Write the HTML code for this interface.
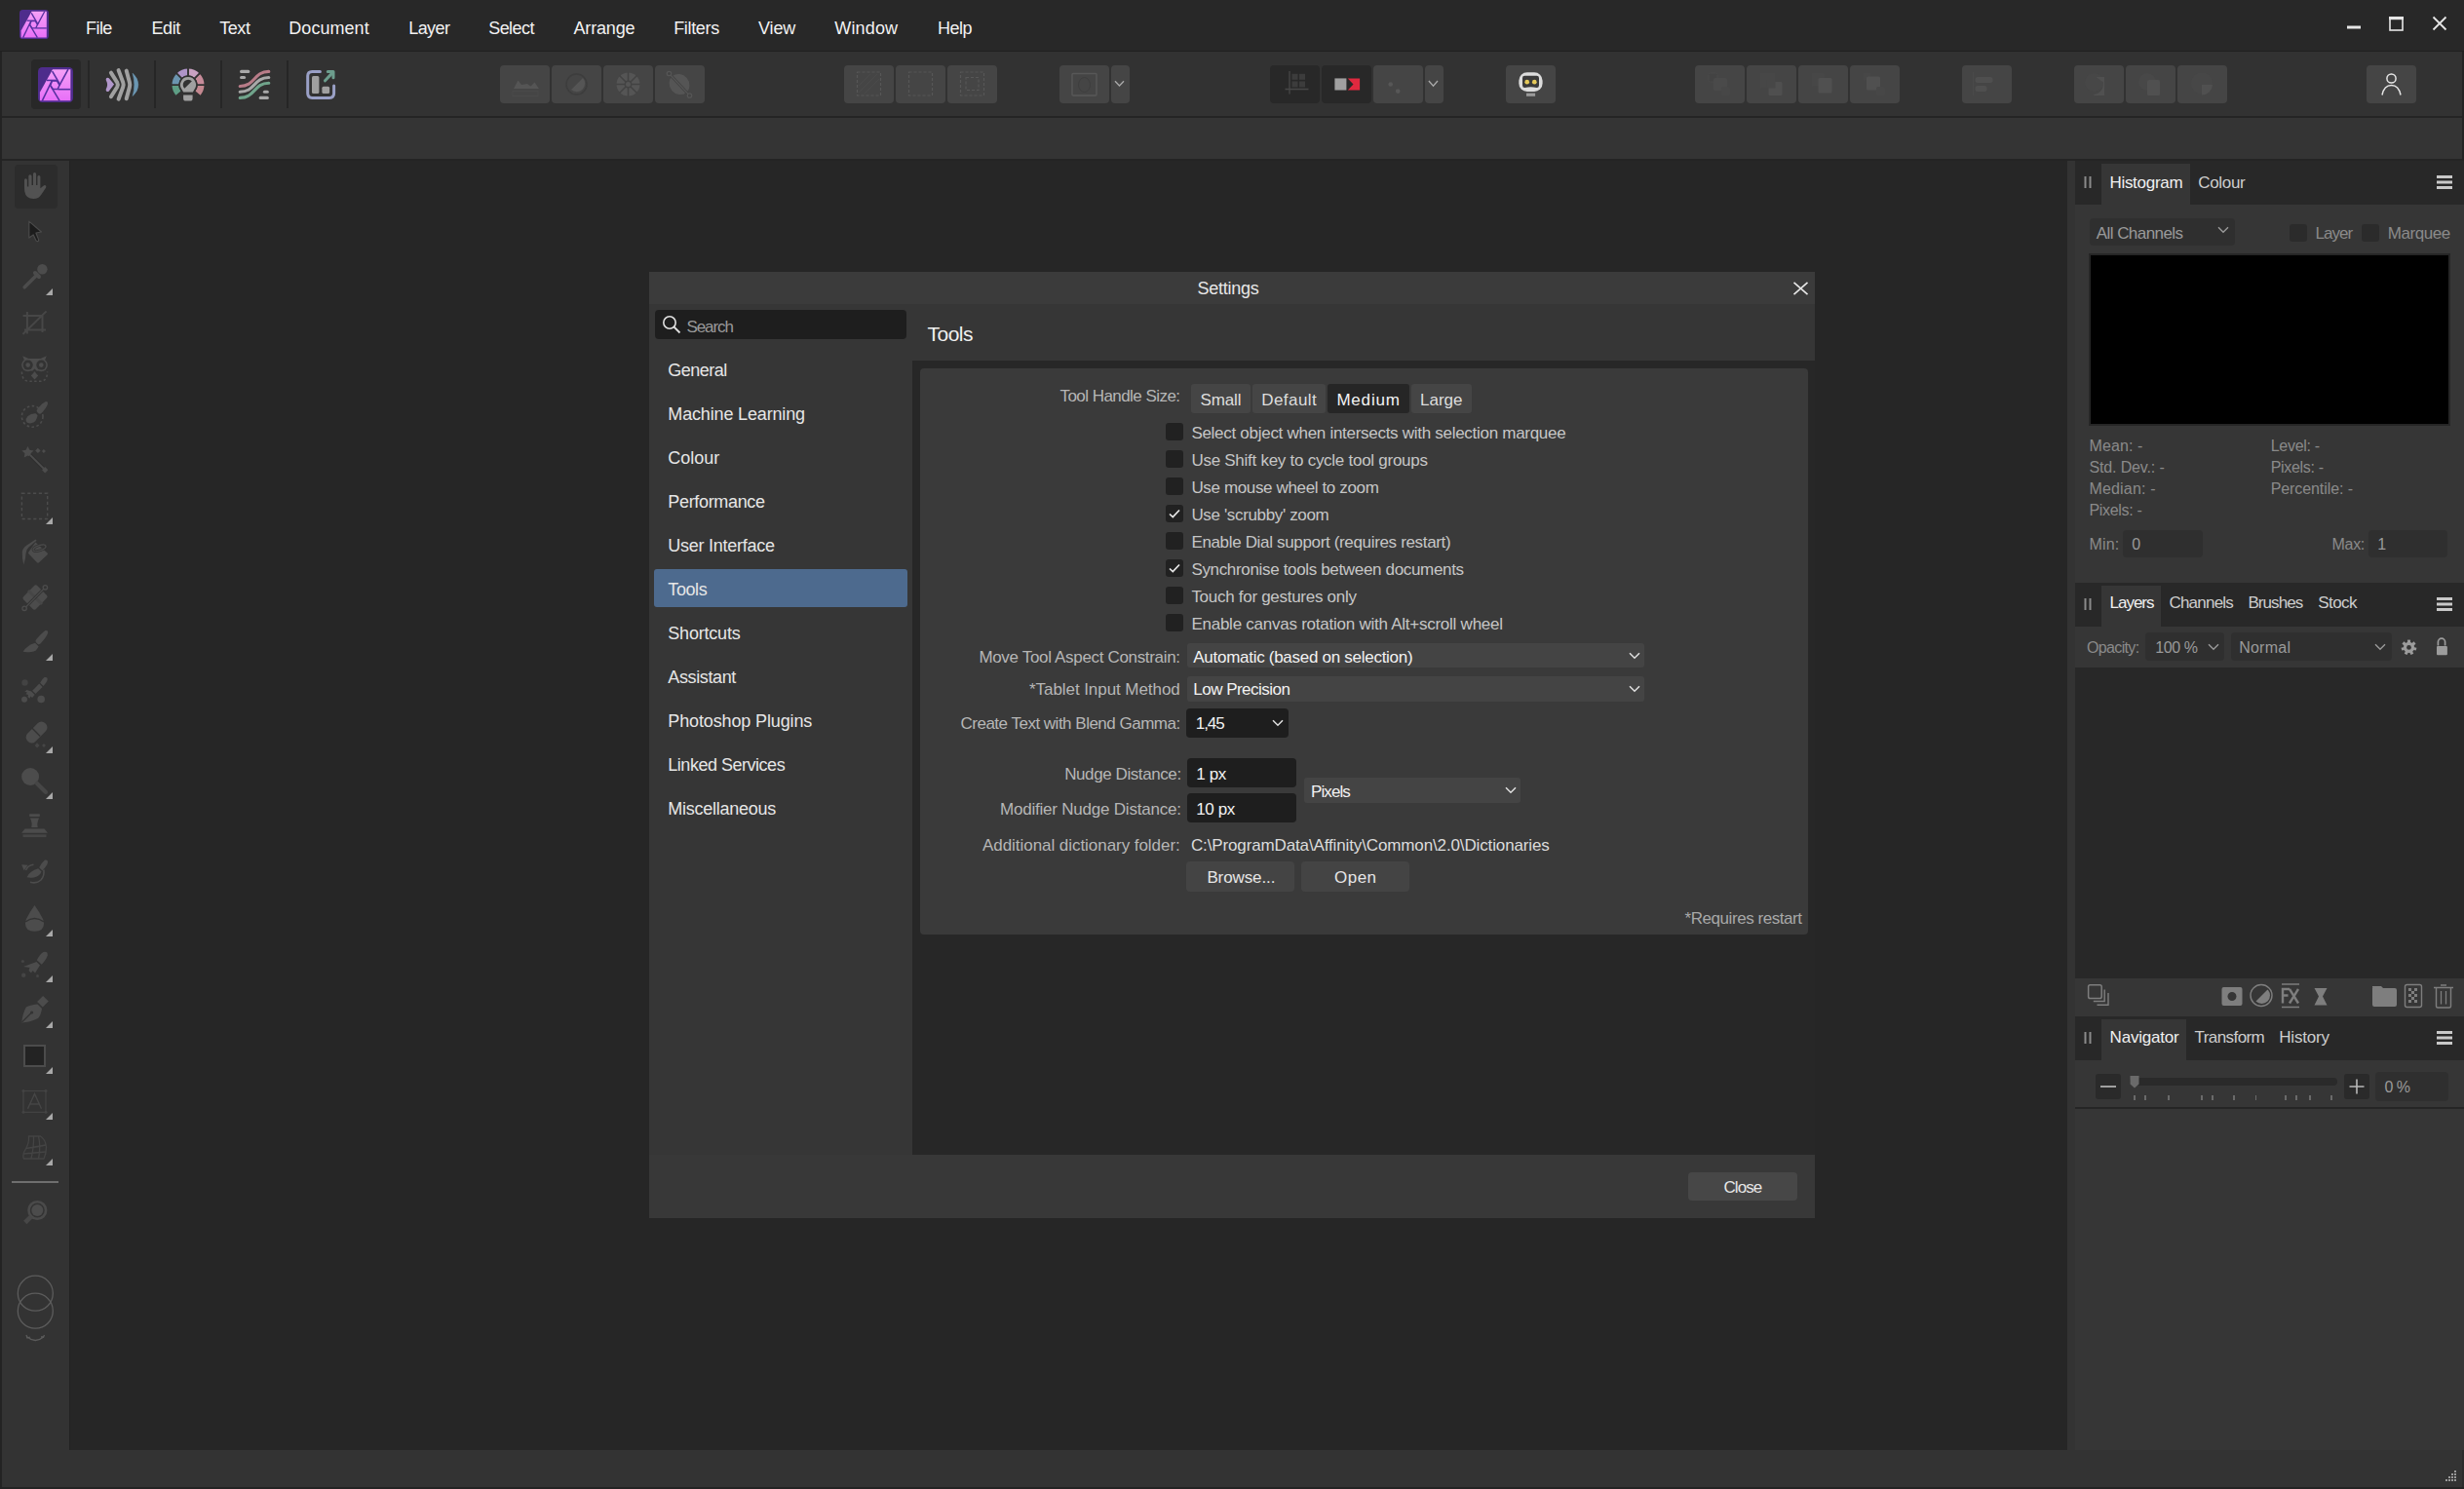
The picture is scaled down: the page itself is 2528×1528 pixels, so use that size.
<!DOCTYPE html>
<html><head><meta charset="utf-8"><title>Affinity Photo - Settings</title>
<style>
html,body{margin:0;padding:0;}
body{width:2528px;height:1528px;position:relative;overflow:hidden;background:#232323;font-family:"Liberation Sans", sans-serif;}
body>div,body>svg{position:absolute;}
.t{white-space:pre;line-height:1;}
</style></head><body>
<div style="left:0px;top:0px;width:2528px;height:52px;background:#282828;"></div>
<div style="left:0px;top:52px;width:2528px;height:1px;background:#202020;"></div>
<div style="left:2px;top:53px;width:2524px;height:66px;background:#323232;"></div>
<div style="left:2px;top:119px;width:2524px;height:2px;background:#242424;"></div>
<div style="left:2px;top:121px;width:2524px;height:42px;background:#343434;"></div>
<div style="left:2px;top:163px;width:2524px;height:2px;background:#242424;"></div>
<div style="left:2px;top:165px;width:69px;height:1323px;background:#333333;"></div>
<div style="left:71px;top:165px;width:2050px;height:1323px;background:#262626;"></div>
<div style="left:71px;top:165px;width:1px;height:1323px;background:#232323;"></div>
<div style="left:2121px;top:165px;width:8px;height:1323px;background:#333333;"></div>
<div style="left:2129px;top:165px;width:399px;height:1323px;background:#363636;"></div>
<div style="left:2526px;top:1488px;width:2px;height:38px;background:#2b2b2b;"></div>
<div style="left:2px;top:1488px;width:2524px;height:38px;background:#333333;"></div>
<svg style="left:20px;top:9.5px;" width="30" height="30" viewBox="0 0 30 30"><defs><linearGradient id="pg20" x1="0" y1="0" x2="0" y2="1"><stop offset="0" stop-color="#f5a0f7"/><stop offset="1" stop-color="#e86ff8"/></linearGradient></defs>
<g transform="scale(1.0)">
<rect x="0" y="0" width="30" height="30" rx="3.6" fill="#4e2c8c"/>
<path d="M12.5 1.8 H27.8 V28.6 H1.6 V21.4 Z" fill="url(#pg20)"/>
<g stroke="#5530a0" stroke-width="1.3" stroke-linecap="butt" fill="none">
<path d="M11.96 11.69 L16.26 11.69 L18.41 15.19 L16.8 18.82 L12.77 18.82 L10.62 15.46 Z"/>
<path d="M12.2 3.4 L18.9 14.9"/><path d="M25.8 1.8 L18.3 15.6"/><path d="M7.5 11.2 H15.9"/>
<path d="M12.0 11.3 L3.6 28.6"/><path d="M10.8 15.9 L18.4 28.6"/><path d="M17.2 18.9 H27.8"/>
</g></g></svg>
<div class="t" style="left:88.00px;top:19.76px;font-size:18px;color:#f2f2f2;letter-spacing:-0.554px;">File</div>
<div class="t" style="left:155.40px;top:19.76px;font-size:18px;color:#f2f2f2;letter-spacing:-0.358px;">Edit</div>
<div class="t" style="left:225.20px;top:19.76px;font-size:18px;color:#f2f2f2;letter-spacing:-0.429px;">Text</div>
<div class="t" style="left:296.30px;top:19.76px;font-size:18px;color:#f2f2f2;letter-spacing:0.044px;">Document</div>
<div class="t" style="left:419.20px;top:19.76px;font-size:18px;color:#f2f2f2;letter-spacing:-0.566px;">Layer</div>
<div class="t" style="left:501.20px;top:19.76px;font-size:18px;color:#f2f2f2;letter-spacing:-0.555px;">Select</div>
<div class="t" style="left:588.50px;top:19.76px;font-size:18px;color:#f2f2f2;letter-spacing:-0.164px;">Arrange</div>
<div class="t" style="left:691.20px;top:19.76px;font-size:18px;color:#f2f2f2;letter-spacing:-0.329px;">Filters</div>
<div class="t" style="left:778.00px;top:19.76px;font-size:18px;color:#f2f2f2;letter-spacing:-0.126px;">View</div>
<div class="t" style="left:856.30px;top:19.76px;font-size:18px;color:#f2f2f2;letter-spacing:0.161px;">Window</div>
<div class="t" style="left:962.00px;top:19.76px;font-size:18px;color:#f2f2f2;letter-spacing:-0.508px;">Help</div>
<svg style="left:2400px;top:10px;" width="120" height="30" viewBox="0 0 120 30"><rect x="8" y="16.5" width="14" height="3" fill="#e6e6e6"/>
<rect x="52" y="8" width="13" height="13" fill="none" stroke="#e6e6e6" stroke-width="1.6"/><rect x="51" y="7" width="15" height="3.2" fill="#e6e6e6"/>
<path d="M96.5 7.5 L109.5 20.5 M109.5 7.5 L96.5 20.5" stroke="#e6e6e6" stroke-width="1.8"/></svg>
<div style="left:32px;top:61px;width:51px;height:51px;background:#282828;border-radius:4px;"></div>
<svg style="left:39px;top:69px;" width="36" height="36" viewBox="0 0 36 36"><defs><linearGradient id="pg39" x1="0" y1="0" x2="0" y2="1"><stop offset="0" stop-color="#f5a0f7"/><stop offset="1" stop-color="#e86ff8"/></linearGradient></defs>
<g transform="scale(1.2)">
<rect x="0" y="0" width="30" height="30" rx="3.6" fill="#4e2c8c"/>
<path d="M12.5 1.8 H27.8 V28.6 H1.6 V21.4 Z" fill="url(#pg39)"/>
<g stroke="#5530a0" stroke-width="1.3" stroke-linecap="butt" fill="none">
<path d="M11.96 11.69 L16.26 11.69 L18.41 15.19 L16.8 18.82 L12.77 18.82 L10.62 15.46 Z"/>
<path d="M12.2 3.4 L18.9 14.9"/><path d="M25.8 1.8 L18.3 15.6"/><path d="M7.5 11.2 H15.9"/>
<path d="M12.0 11.3 L3.6 28.6"/><path d="M10.8 15.9 L18.4 28.6"/><path d="M17.2 18.9 H27.8"/>
</g></g></svg>
<div style="left:90px;top:62px;width:2px;height:49px;background:#262626;"></div>
<div style="left:158px;top:62px;width:2px;height:49px;background:#262626;"></div>
<div style="left:226px;top:62px;width:2px;height:49px;background:#262626;"></div>
<div style="left:294px;top:62px;width:2px;height:49px;background:#262626;"></div>
<svg style="left:105px;top:68px;" width="40" height="38" viewBox="0 0 40 38"><g transform="translate(-105,-68)">
<path d="M109.4 80 Q110.6 79.3 111.8 80.3 L117.1 86.6 L111.8 93.5 Q110.6 94.5 109.4 93.8 Q108.3 93 108.8 91.5 Q110.1 88.8 110.1 86.9 Q110.1 84.9 108.8 82.3 Q108.3 80.8 109.4 80 Z" fill="#b197cb"/>
<g fill="none" stroke="#a0a0a0" stroke-width="4" stroke-linecap="round" stroke-linejoin="round">
<path d="M113.9 74.6 L120.2 84.6 Q121.5 86.9 120.2 89.2 L113.9 99.2"/>
<path d="M121.6 72.1 L126.2 84.4 Q127.1 86.9 126.2 89.4 L121.6 101.7"/>
<path d="M129.7 72.6 L132.9 84.4 Q133.6 86.9 132.9 89.4 L129.7 101.2"/>
</g>
<path d="M136.2 75.3 Q141.8 80.5 141.8 86.9 Q141.8 93.3 136.2 98.4 Q137.9 92.5 137.9 86.9 Q137.9 81.3 136.2 75.3 Z" fill="#6b97b3" stroke="#6b97b3" stroke-width="0.6" stroke-linejoin="round"/>
</g></svg>
<svg style="left:170px;top:68px;" width="46" height="40" viewBox="0 0 46 40"><path d="M35.64 29.71 A16.5 16.5 0 0 0 39.50 19.10 L32.80 19.10 A9.8 9.8 0 0 1 30.51 25.40 Z" fill="#c48890"/><path d="M39.50 19.10 A16.5 16.5 0 0 0 34.67 7.43 L29.93 12.17 A9.8 9.8 0 0 1 32.80 19.10 Z" fill="#c68b99"/><path d="M34.67 7.43 A16.5 16.5 0 0 0 23.00 2.60 L23.00 9.30 A9.8 9.8 0 0 1 29.93 12.17 Z" fill="#c9a2c2"/><path d="M23.00 2.60 A16.5 16.5 0 0 0 11.33 7.43 L16.07 12.17 A9.8 9.8 0 0 1 23.00 9.30 Z" fill="#ae94c8"/><path d="M11.33 7.43 A16.5 16.5 0 0 0 6.50 19.10 L13.20 19.10 A9.8 9.8 0 0 1 16.07 12.17 Z" fill="#6b95b0"/><path d="M6.50 19.10 A16.5 16.5 0 0 0 10.36 29.71 L15.49 25.40 A9.8 9.8 0 0 1 13.20 19.10 Z" fill="#5e9e85"/><g transform="translate(-170,-68)">
<g stroke="#323232" stroke-width="1.9"><path d="M174 87.1 H212"/><path d="M193 87.1 V68"/><path d="M193 87.1 L206.5 73.6"/><path d="M193 87.1 L179.5 73.6"/></g>
<circle cx="193" cy="87.1" r="9.8" fill="#323232"/>
<path d="M193 79.1 A7.9 7.9 0 0 1 199.3 91.9 L197.9 94.5 H188.1 L186.7 91.9 A7.9 7.9 0 0 1 193 79.1 Z" fill="#a0a0a0"/>
<path d="M196.9 83.2 A5.3 5.3 0 0 0 189.3 90.8 Z" fill="#323232"/>
<path d="M188.1 97.4 H197.6 V100.9 Q197.6 103.5 195 103.5 H190.7 Q188.1 103.5 188.1 100.9 Z" fill="#a0a0a0"/>
</g></svg>
<svg style="left:240px;top:68px;" width="42" height="38" viewBox="0 0 42 38"><g transform="translate(-240,-68)" fill="none" stroke-width="3.1" stroke-linecap="round">
<g stroke="#a8a8a8"><path d="M247.6 73.4 H254.8"/><path d="M247.6 79.5 H250.6"/><path d="M271.4 94.3 H274.3"/><path d="M267.2 100.4 H274.3"/>
<path d="M246.2 94.3 C262 94.3 260 79.5 275.8 79.5"/></g>
<path d="M246.2 88.5 C262 88.5 260 73.4 275.8 73.4" stroke="#b87c88"/>
<path d="M246.2 100.4 C262 100.4 260 85.3 275.8 85.3" stroke="#70a48b"/>
</g></svg>
<svg style="left:310px;top:68px;" width="40" height="38" viewBox="0 0 40 38"><g transform="translate(-310,-68)">
<path d="M328.4 73.5 H320.3 Q315.7 73.5 315.7 78.1 V95.8 Q315.7 100.4 320.3 100.4 H338 Q342.6 100.4 342.6 95.8 V88" fill="none" stroke="#9aa0c6" stroke-width="3" stroke-linecap="round"/>
<rect x="320" y="78" width="7.4" height="17.9" rx="1.5" fill="#a0a0a0"/>
<rect x="330.4" y="88.7" width="7.7" height="7.2" rx="1.5" fill="#a0a0a0"/>
<path d="M333.5 82.8 L341.2 74.6" stroke="#6c9d8d" stroke-width="3" stroke-linecap="round"/>
<path d="M336.3 73.5 H342 V79.8" fill="none" stroke="#6c9d8d" stroke-width="3" stroke-linecap="round" stroke-linejoin="round"/>
</g></svg>
<div style="left:513px;top:67px;width:51px;height:39px;background:#454545;border-radius:4px;"></div>
<div style="left:566px;top:67px;width:51px;height:39px;background:#454545;border-radius:4px;"></div>
<div style="left:619px;top:67px;width:51px;height:39px;background:#454545;border-radius:4px;"></div>
<div style="left:672px;top:67px;width:51px;height:39px;background:#454545;border-radius:4px;"></div>
<div style="left:866px;top:67px;width:51px;height:39px;background:#454545;border-radius:4px;"></div>
<div style="left:919px;top:67px;width:51px;height:39px;background:#454545;border-radius:4px;"></div>
<div style="left:972px;top:67px;width:51px;height:39px;background:#454545;border-radius:4px;"></div>
<div style="left:1087px;top:67px;width:51px;height:39px;background:#454545;border-radius:4px;"></div>
<div style="left:1140px;top:67px;width:19px;height:39px;background:#454545;border-radius:4px;"></div>
<div style="left:1303px;top:67px;width:51px;height:39px;background:#282828;border-radius:4px;"></div>
<div style="left:1356px;top:67px;width:51px;height:39px;background:#282828;border-radius:4px;"></div>
<div style="left:1409px;top:67px;width:51px;height:39px;background:#454545;border-radius:4px;"></div>
<div style="left:1462px;top:67px;width:19px;height:39px;background:#454545;border-radius:4px;"></div>
<div style="left:1545px;top:67px;width:51px;height:39px;background:#454545;border-radius:4px;"></div>
<div style="left:1739px;top:67px;width:51px;height:39px;background:#454545;border-radius:4px;"></div>
<div style="left:1792px;top:67px;width:51px;height:39px;background:#454545;border-radius:4px;"></div>
<div style="left:1845px;top:67px;width:51px;height:39px;background:#454545;border-radius:4px;"></div>
<div style="left:1898px;top:67px;width:51px;height:39px;background:#454545;border-radius:4px;"></div>
<div style="left:2013px;top:67px;width:51px;height:39px;background:#454545;border-radius:4px;"></div>
<div style="left:2128px;top:67px;width:51px;height:39px;background:#454545;border-radius:4px;"></div>
<div style="left:2181px;top:67px;width:51px;height:39px;background:#454545;border-radius:4px;"></div>
<div style="left:2234px;top:67px;width:51px;height:39px;background:#454545;border-radius:4px;"></div>
<div style="left:2428px;top:67px;width:51px;height:39px;background:#454545;border-radius:4px;"></div>
<svg style="left:513px;top:67px;" width="51" height="39" viewBox="0 0 51 39"><path d="M14 24 L18.5 15.5 L22 20 L28 19 L31.5 21.5 L35.5 17.5 L40 24 Z" fill="#555555"/><rect x="13" y="26.5" width="26" height="5" fill="none" stroke="#4a4a4a" stroke-width="1"/></svg>
<svg style="left:566px;top:67px;" width="51" height="39" viewBox="0 0 51 39"><circle cx="25.5" cy="19.5" r="10.5" fill="none" stroke="#3d3d3d" stroke-width="1.5"/><path d="M32 13 A8.5 8.5 0 0 1 20 25 Z" fill="#555555"/></svg>
<svg style="left:619px;top:67px;" width="51" height="39" viewBox="0 0 51 39"><g fill="#555555"><circle cx="25.5" cy="19.5" r="12"/></g><g stroke="#434343" stroke-width="1.6"><path d="M25.5 7 V32 M13 19.5 H38 M16.5 10.5 L34.5 28.5 M34.5 10.5 L16.5 28.5"/></g><circle cx="25.5" cy="19.5" r="3.2" fill="#555555" stroke="#434343" stroke-width="1.4"/></svg>
<svg style="left:672px;top:67px;" width="51" height="39" viewBox="0 0 51 39"><ellipse cx="25" cy="19.5" rx="10" ry="11" transform="rotate(-40 25 19.5)" fill="#555555"/><path d="M14.5 8.5 L35.5 31" stroke="#434343" stroke-width="3"/><path d="M14.5 8.5 L35.5 31" stroke="#555555" stroke-width="1.2"/><circle cx="14.5" cy="8.5" r="2.2" fill="#434343" stroke="#555555" stroke-width="1.3"/><circle cx="35.5" cy="31" r="2.2" fill="#434343" stroke="#555555" stroke-width="1.3"/></svg>
<svg style="left:866px;top:67px;" width="51" height="39" viewBox="0 0 51 39"><rect x="13.5" y="7" width="24" height="24" fill="none" stroke="#575757" stroke-width="1.2" stroke-dasharray="3 2"/><path d="M15 28 L34 9 M15 21 L27 9 M21 29 L36 14" stroke="#4a4a4a" stroke-width="1"/></svg>
<svg style="left:919px;top:67px;" width="51" height="39" viewBox="0 0 51 39"><rect x="13.5" y="7" width="24" height="24" fill="none" stroke="#575757" stroke-width="1.2" stroke-dasharray="3 2"/></svg>
<svg style="left:972px;top:67px;" width="51" height="39" viewBox="0 0 51 39"><rect x="13.5" y="7" width="24" height="24" fill="none" stroke="#575757" stroke-width="1.2" stroke-dasharray="3 2"/><rect x="19" y="12.5" width="13" height="13" fill="none" stroke="#575757" stroke-width="1.2" stroke-dasharray="3 2"/></svg>
<svg style="left:1087px;top:67px;" width="72" height="39" viewBox="0 0 72 39"><rect x="13" y="8.5" width="25" height="22.5" rx="1" fill="none" stroke="#585858" stroke-width="1.4"/><ellipse cx="25.5" cy="20" rx="6" ry="7.5" fill="none" stroke="#3e3e3e" stroke-width="1"/><path d="M57 16.3 L61.5 20.9 L66 16.3" fill="none" stroke="#a8a8a8" stroke-width="1.4"/></svg>
<svg style="left:1303px;top:67px;" width="51" height="39" viewBox="0 0 51 39"><path d="M20 6 V29.5 M15.5 24.5 H39.5" stroke="#474747" stroke-width="1.3"/><g fill="#3c3c3c"><rect x="22.5" y="8.8" width="6" height="6"/><rect x="30" y="8.8" width="6" height="6"/><rect x="22.5" y="16.4" width="6" height="6"/><rect x="30" y="16.4" width="6" height="6"/></g></svg>
<svg style="left:1356px;top:67px;" width="51" height="39" viewBox="0 0 51 39"><rect x="13.4" y="13.4" width="12" height="12.1" fill="#a0a0a0"/><path d="M26.8 13.4 H39.1 V25.5 H26.8 L32.5 19.4 Z" fill="#e0293f"/></svg>
<svg style="left:1409px;top:67px;" width="72" height="39" viewBox="0 0 72 39"><circle cx="17.7" cy="19.5" r="2.3" fill="#575757"/><circle cx="25.2" cy="26.6" r="2.3" fill="#575757"/><path d="M56.9 16 L61.5 21.1 L66 16" fill="none" stroke="#a8a8a8" stroke-width="1.4"/></svg>
<svg style="left:1545px;top:67px;" width="51" height="39" viewBox="0 0 51 39"><rect x="13.3" y="7.3" width="24.3" height="19.8" rx="8.5" fill="#dcdcdc"/>
<path d="M17 13 Q17 10.8 19.3 10.8 H31.6 Q34 10.8 34 13 V20.5 Q34 23 31.6 23 Q28.5 22.3 25.5 22.3 Q22.5 22.3 19.4 23 Q17 23 17 20.5 Z" fill="#3a3a3a"/>
<circle cx="21.7" cy="17.2" r="2.35" fill="#e5c95a"/><circle cx="29.3" cy="17.2" r="2.35" fill="#e5c95a"/>
<rect x="21" y="28.6" width="9.1" height="3.2" fill="#9a9a9a"/></svg>
<svg style="left:1739px;top:67px;" width="51" height="39" viewBox="0 0 51 39"><g fill="#4a4a4a"><rect x="14" y="8" width="9" height="9" rx="1.5" fill="#434343" stroke="#4a4a4a" stroke-width="1"/><rect x="19" y="13" width="14" height="13" rx="1.5"/><rect x="27" y="22" width="9" height="9" rx="1.5" fill="#474747"/></g></svg>
<svg style="left:1792px;top:67px;" width="51" height="39" viewBox="0 0 51 39"><rect x="13.5" y="7.5" width="16" height="16" rx="1.5" fill="#474747"/><rect x="22.5" y="17" width="14" height="14" rx="1.5" fill="#4f4f4f"/><rect x="20.5" y="15" width="9" height="8.5" fill="#474747"/></svg>
<svg style="left:1845px;top:67px;" width="51" height="39" viewBox="0 0 51 39"><rect x="13.5" y="7.5" width="13.5" height="14" rx="1.5" fill="#474747"/><rect x="20.5" y="13" width="14" height="15.5" rx="1.5" fill="#505050"/></svg>
<svg style="left:1898px;top:67px;" width="51" height="39" viewBox="0 0 51 39"><rect x="13.5" y="7.5" width="8" height="8" rx="1.5" fill="#474747"/><rect x="17" y="11.5" width="14" height="14" rx="1.5" fill="#505050"/><rect x="27" y="22" width="9" height="9" rx="1.5" fill="#474747"/></svg>
<svg style="left:2013px;top:67px;" width="51" height="39" viewBox="0 0 51 39"><path d="M11.5 7 V31" stroke="#4a4a4a" stroke-width="1.4"/><rect x="13.5" y="12" width="18" height="6" rx="2.5" fill="#4f4f4f"/><rect x="13.5" y="21" width="12" height="6" rx="2.5" fill="#4f4f4f"/></svg>
<svg style="left:2128px;top:67px;" width="51" height="39" viewBox="0 0 51 39"><circle cx="20.5" cy="17.5" r="9.5" fill="#474747"/><path d="M22.5 12 H31 V31 H21 Q20 31 20 30 Q30 29 30 17.5 Z" fill="#505050"/></svg>
<svg style="left:2181px;top:67px;" width="51" height="39" viewBox="0 0 51 39"><circle cx="22" cy="17" r="9" fill="#484848"/><rect x="22" y="15" width="13" height="16" rx="1.5" fill="#505050"/></svg>
<svg style="left:2234px;top:67px;" width="51" height="39" viewBox="0 0 51 39"><circle cx="25" cy="18.5" r="11" fill="#474747"/><path d="M25 20 H36 A11 11 0 0 1 25 30.5 Z" fill="#505050"/></svg>
<svg style="left:2428px;top:67px;" width="51" height="39" viewBox="0 0 51 39"><circle cx="25.5" cy="13.5" r="4.6" fill="none" stroke="#e6e6e6" stroke-width="1.5"/><path d="M16 30.5 Q18 20.5 25.5 20.5 Q33 20.5 35 30.5" fill="none" stroke="#e6e6e6" stroke-width="1.5"/></svg>
<div style="left:14.5px;top:169px;width:44.5px;height:44.5px;background:#2c2c2c;border-radius:4px;"></div>
<svg style="left:20px;top:173px;" width="32" height="34" viewBox="0 0 32 34"><g transform="translate(-20,-173)" fill="#525252"><path d="M25 184.7 Q25 183.2 26.45 183.2 Q27.9 183.2 27.9 184.7 V191.5 H29.3 V180.8 Q29.3 179.3 30.9 179.3 Q32.5 179.3 32.5 180.8 V190 H34 V178.6 Q34 177.1 35.55 177.1 Q37.1 177.1 37.1 178.6 V190 H38.4 V181.6 Q38.4 180.1 39.9 180.1 Q41.4 180.1 41.4 181.6 V193.2 L44.8 190.4 Q46.2 189.6 47 190.6 Q47.7 191.6 47 192.7 L42.5 199.5 Q39.5 204.1 34.5 204.1 Q26.5 204.1 25.3 196.5 Q25 194.5 25 192 Z"/></g></svg>
<svg style="left:20px;top:220px;" width="30" height="34" viewBox="0 0 30 34"><g transform="translate(-20,-220)"><path d="M29.8 227.1 L42.5 238 L36.9 239 L39.5 245.6 Q40 247.2 38.6 247.6 Q37.4 247.9 36.8 246.6 L34.2 240.9 L29.8 244 Z" fill="#1c1c1c" stroke="#4a4a4a" stroke-width="1.2" stroke-linejoin="round"/></g></svg>
<svg style="left:20px;top:268px;" width="36" height="36" viewBox="0 0 36 36"><g transform="translate(-20,-268)"><circle cx="43.4" cy="276.3" r="5.2" fill="#4c4c4c"/><path d="M36 280 L40 284" stroke="#4c4c4c" stroke-width="4" stroke-linecap="round"/><path d="M38 282 L25.2 294.8" stroke="#4c4c4c" stroke-width="3.6" stroke-linecap="round"/></g></svg>
<svg style="left:47px;top:296px;" width="7" height="7" viewBox="0 0 7 7"><path d="M0 7 L7 0 L7 7 Z" fill="#a8a8a8"/></svg>
<svg style="left:20px;top:316px;" width="32" height="32" viewBox="0 0 32 32"><g transform="translate(-20,-316)" stroke="#474747" stroke-width="2" fill="none"><path d="M27.9 320 V342.5 M23.6 323.9 H43.5 V341 M25 338.6 H47 M23.4 343 L47.6 319.4"/></g></svg>
<svg style="left:20px;top:362px;" width="32" height="32" viewBox="0 0 32 32"><g transform="translate(-20,-362)"><g fill="#4c4c4c"><circle cx="28.7" cy="374.6" r="6.6"/><circle cx="42.3" cy="374.6" r="6.6"/>
<path d="M23.2 365.2 Q35.5 372.5 47.8 365.2 L45.5 371 H25.5 Z"/><path d="M28.7 368 H42.3 V377.8 L35.5 383 L28.7 377.8 Z"/></g>
<circle cx="28.7" cy="374.6" r="5" fill="#333"/><circle cx="42.3" cy="374.6" r="5" fill="#333"/><circle cx="28.7" cy="374.6" r="2.3" fill="#4c4c4c"/><circle cx="42.3" cy="374.6" r="2.3" fill="#4c4c4c"/>
<path d="M35.5 378.5 L40.5 383.3 L35.5 381.6 L30.5 383.3 Z" fill="#333"/>
<path d="M35.5 381.4 L39.2 385.6 L35.5 389.6 L31.8 385.6 Z" fill="#4c4c4c"/>
<path d="M22.4 381.5 Q22.6 391.3 30 391.3 H41 Q48.4 391.3 48.6 381.5" fill="none" stroke="#4c4c4c" stroke-width="1.6" stroke-dasharray="2.4 2.4"/></g></svg>
<svg style="left:20px;top:410px;" width="32" height="32" viewBox="0 0 32 32"><g transform="translate(-20,-410)"><circle cx="33.2" cy="427.4" r="10.8" fill="none" stroke="#4c4c4c" stroke-width="1.6" stroke-dasharray="2.6 2.4"/><circle cx="33.2" cy="427.4" r="5" fill="#333"/><path d="M47 412 Q49.6 411.8 48.9 414.8 Q48 418 43 423.5 Q41 425.5 39.5 424.3 L38 422.8 Q36.8 421.2 38.8 419 Q44 413.2 47 412 Z" fill="#4c4c4c"/><path d="M36.6 424.2 L38.6 426.2 Q37.5 433.5 32 434.3 Q27.5 434.8 26.8 432.6 Q26 429.5 28.5 427 Q32 424 36.6 424.2 Z" fill="#4c4c4c"/></g></svg>
<svg style="left:20px;top:456px;" width="34" height="32" viewBox="0 0 34 32"><g transform="translate(-20,-456)"><path d="M28.5 458 L30.4 461.8 L34.6 462.4 L31.5 465.3 L32.3 469.5 L28.5 467.5 L24.7 469.5 L25.5 465.3 L22.4 462.4 L26.6 461.8 Z" fill="#4c4c4c"/><path d="M31 467 L45.5 481.5" stroke="#2f2f2f" stroke-width="3.5"/><path d="M31 467 L45.5 481.5" stroke="#4c4c4c" stroke-width="1.8"/><rect x="44" y="480" width="4.5" height="4.5" transform="rotate(45 46.2 482.2)" fill="#4c4c4c"/><rect x="37" y="460.5" width="3.8" height="3.8" transform="rotate(45 38.9 462.4)" fill="#4c4c4c"/><rect x="43.5" y="461.5" width="2.8" height="2.8" transform="rotate(45 44.9 462.9)" fill="#4c4c4c"/></g></svg>
<svg style="left:20px;top:504px;" width="32" height="32" viewBox="0 0 32 32"><rect x="2.4" y="2.3" width="26.3" height="26.2" fill="none" stroke="#4c4c4c" stroke-width="1.4" stroke-dasharray="3.2 2.6"/></svg>
<svg style="left:47px;top:530.6px;" width="7" height="7" viewBox="0 0 7 7"><path d="M0 7 L7 0 L7 7 Z" fill="#a8a8a8"/></svg>
<svg style="left:20px;top:550px;" width="32" height="32" viewBox="0 0 32 32"><g transform="translate(-20,-550)"><path d="M36.4 556.5 L48.6 567.4 Q49.5 568.4 48.6 569.3 L40 577.2 Q39 578.1 38 577.2 L29.4 568.3 Q28.6 567.4 29.4 566.5 Z" fill="#4c4c4c"/><path d="M24.3 579.5 Q22.5 573 22.8 566.5 Q23.2 562.5 27.5 559.5 L36.6 553.4 L37.5 554.8 L29.5 561.5 Q26.8 564 26.6 567.5 Q26.5 573 24.3 579.5 Z" fill="#4c4c4c"/><ellipse cx="40.5" cy="562.3" rx="6.8" ry="2.6" transform="rotate(-18 40.5 562.3)" fill="none" stroke="#333" stroke-width="2.6"/><ellipse cx="40.5" cy="562.3" rx="6.8" ry="2.6" transform="rotate(-18 40.5 562.3)" fill="none" stroke="#4c4c4c" stroke-width="1.2"/></g></svg>
<svg style="left:20px;top:598px;" width="32" height="32" viewBox="0 0 32 32"><g transform="translate(-20,-598)"><rect x="26" y="604" width="20" height="18" rx="2.2" transform="rotate(-45 36 613)" fill="#4c4c4c"/><path d="M29 606 L43 620" stroke="#464646" stroke-width="3"/><path d="M25.1 624.3 L46.6 602.5" stroke="#333" stroke-width="3"/><path d="M25.1 624.3 L46.6 602.5" stroke="#4c4c4c" stroke-width="1.2"/><circle cx="46.4" cy="602.8" r="2.2" fill="#333" stroke="#4c4c4c" stroke-width="1.3"/><circle cx="25.1" cy="624.3" r="2.2" fill="#333" stroke="#4c4c4c" stroke-width="1.3"/></g></svg>
<svg style="left:20px;top:644px;" width="34" height="30" viewBox="0 0 34 30"><g transform="translate(-20,-644)"><path d="M46.5 647 Q50 646.5 49 650 Q47.5 654 41.5 660.5 Q40 662 38.5 660.8 L36.8 659 Q35.8 657.5 37.3 656 Q43 649.5 46.5 647 Z" fill="#4c4c4c"/><path d="M36 659.8 L39.6 663.2 Q38 668.2 32 669 Q26.5 669.6 23.6 668.8 Q27.5 662.5 36 659.8 Z" fill="#4c4c4c"/></g></svg>
<svg style="left:47px;top:671px;" width="7" height="7" viewBox="0 0 7 7"><path d="M0 7 L7 0 L7 7 Z" fill="#a8a8a8"/></svg>
<svg style="left:20px;top:692px;" width="32" height="32" viewBox="0 0 32 32"><g transform="translate(-20,-692)"><path d="M45.6 695 Q49.2 694.3 48.6 697.8 Q48 700 44.5 704 L41.2 700.7 Q43.5 696.2 45.6 695 Z" fill="#4c4c4c"/><path d="M40.3 701.6 L43.6 704.9 L36.5 712 L33.2 708.7 Z" fill="#4c4c4c"/><path d="M32.2 709.5 L35.7 713 L33 716 L31.5 714.5 L30.3 716.8 L28.5 715 L29 713 L26.5 712.3 L28 710.5 L25.3 709.8 L27.5 708 Z" fill="#4c4c4c"/><circle cx="25.5" cy="700.5" r="3.2" fill="#434343"/><circle cx="25" cy="717.8" r="3" fill="#4c4c4c"/><circle cx="42.2" cy="717.5" r="3.8" fill="#4c4c4c"/></g></svg>
<svg style="left:20px;top:738px;" width="36" height="36" viewBox="0 0 36 36"><g transform="translate(-20,-738)"><rect x="24.8" y="745.8" width="25.5" height="11.5" rx="5.2" transform="rotate(-45 37.5 751.5)" fill="#4c4c4c"/><path d="M32.3 746.5 L41.2 755.4" stroke="#333" stroke-width="1.4"/><rect x="36.3" y="763.1" width="3.6" height="3.6" transform="rotate(45 38.1 764.9)" fill="#454545"/><rect x="43.6" y="763.5" width="2.8" height="2.8" transform="rotate(45 45 764.9)" fill="#454545"/></g></svg>
<svg style="left:47px;top:765.8px;" width="7" height="7" viewBox="0 0 7 7"><path d="M0 7 L7 0 L7 7 Z" fill="#a8a8a8"/></svg>
<svg style="left:20px;top:786px;" width="34" height="32" viewBox="0 0 34 32"><g transform="translate(-20,-786)"><circle cx="31.1" cy="797" r="9" fill="#4c4c4c"/><path d="M38 804 L47 813" stroke="#464646" stroke-width="4.2" stroke-linecap="round"/></g></svg>
<svg style="left:47px;top:813px;" width="7" height="7" viewBox="0 0 7 7"><path d="M0 7 L7 0 L7 7 Z" fill="#a8a8a8"/></svg>
<svg style="left:20px;top:832px;" width="32" height="32" viewBox="0 0 32 32"><g transform="translate(-20,-832)"><rect x="30" y="835.2" width="11" height="2.8" rx="1.2" fill="#4c4c4c"/><path d="M31 839.5 H40 Q37.5 845 38.8 849 H32.2 Q33.5 845 31 839.5 Z" fill="#4c4c4c"/><path d="M25.5 850.5 H45.5 L48.9 854.8 H22.1 Z" fill="#4c4c4c"/><rect x="23.5" y="856.3" width="24" height="2.8" fill="#454545"/></g></svg>
<svg style="left:20px;top:880px;" width="32" height="32" viewBox="0 0 32 32"><g transform="translate(-20,-880)"><path d="M46 882.5 Q49.6 882 48.9 885.5 Q48 888.5 43.5 893.5 L40.2 890.2 Q43 885 46 882.5 Z" fill="#4c4c4c"/><path d="M39.2 891.2 L42.5 894.5 Q40.5 899.5 34.5 900.5 Q30.5 901 27.5 900.2 Q30.5 893.5 39.2 891.2 Z" fill="#4c4c4c"/><path d="M26.5 893 Q28.5 888 34.5 887.3" fill="none" stroke="#4c4c4c" stroke-width="1.6"/><path d="M22.2 887.2 L28.6 887.8 L24.6 893.2 Z" fill="#4c4c4c"/><path d="M44.8 892.5 Q46 898.5 42 903 Q37.5 907.2 31 905.2" fill="none" stroke="#4c4c4c" stroke-width="1.6"/></g></svg>
<svg style="left:20px;top:926px;" width="32" height="32" viewBox="0 0 32 32"><g transform="translate(-20,-926)"><path d="M35.5 928.9 Q40 935 44 943 Q45.5 946.5 45 948 Q45 955.7 35.5 955.7 Q26 955.7 26 948 Q25.5 946.5 27 943 Q31 935 35.5 928.9 Z" fill="#4c4c4c"/><path d="M26 946 Q35.5 939 45 946" fill="none" stroke="#333" stroke-width="1.4"/></g></svg>
<svg style="left:47px;top:954px;" width="7" height="7" viewBox="0 0 7 7"><path d="M0 7 L7 0 L7 7 Z" fill="#a8a8a8"/></svg>
<svg style="left:20px;top:974px;" width="32" height="32" viewBox="0 0 32 32"><g transform="translate(-20,-974)"><path d="M44.5 977 Q49.2 976 48.8 980.2 Q48.2 983.5 42.8 989.8 L37.8 985.2 Q41 979 44.5 977 Z" fill="#4c4c4c"/><path d="M37.5 987 L41 990.5 L36 998.5 L33.5 996 L32 998.5 L29.5 996 L30.5 993 L24 992 Z" fill="#4c4c4c"/><circle cx="23.4" cy="986.5" r="1.5" fill="#454545"/><circle cx="24.2" cy="1000.8" r="2.2" fill="#454545"/><circle cx="38.5" cy="1001.5" r="1.5" fill="#454545"/></g></svg>
<svg style="left:47px;top:1001px;" width="7" height="7" viewBox="0 0 7 7"><path d="M0 7 L7 0 L7 7 Z" fill="#a8a8a8"/></svg>
<svg style="left:20px;top:1020px;" width="32" height="32" viewBox="0 0 32 32"><g transform="translate(-20,-1020)"><rect x="40" y="1023.5" width="8" height="8.5" transform="rotate(45 44 1027.7)" fill="#4c4c4c"/><path d="M38.5 1030.5 L43 1035 Q42 1042 39 1045 Q31 1049 22.2 1049.5 Q23 1040.5 26.8 1033.5 Q30.5 1031.5 38.5 1030.5 Z" fill="#4c4c4c"/><path d="M22.5 1049 L32 1039.5" stroke="#333" stroke-width="1.2"/><circle cx="32.6" cy="1039" r="1.6" fill="#333"/></g></svg>
<svg style="left:47px;top:1048px;" width="7" height="7" viewBox="0 0 7 7"><path d="M0 7 L7 0 L7 7 Z" fill="#a8a8a8"/></svg>
<div style="left:24px;top:1072px;width:23px;height:23px;background:#232323;box-shadow:inset 0 0 0 2px #4c4c4c;"></div>
<svg style="left:47px;top:1094.5px;" width="7" height="7" viewBox="0 0 7 7"><path d="M0 7 L7 0 L7 7 Z" fill="#a8a8a8"/></svg>
<svg style="left:20px;top:1116px;" width="32" height="30" viewBox="0 0 32 30"><g transform="translate(-20,-1116)"><rect x="24" y="1119.5" width="23" height="21.8" fill="none" stroke="#444" stroke-width="1.2"/><g fill="#444"><circle cx="24" cy="1119.5" r="1.5"/><circle cx="47" cy="1119.5" r="1.5"/><circle cx="24" cy="1141.3" r="1.5"/><circle cx="47" cy="1141.3" r="1.5"/></g><path d="M28.5 1137.8 L35.5 1122.5 L42.5 1137.8 M30.7 1133 H40.3" fill="none" stroke="#464646" stroke-width="1.4"/></g></svg>
<svg style="left:47px;top:1142px;" width="7" height="7" viewBox="0 0 7 7"><path d="M0 7 L7 0 L7 7 Z" fill="#a8a8a8"/></svg>
<svg style="left:20px;top:1162px;" width="32" height="32" viewBox="0 0 32 32"><g transform="translate(-20,-1162)" fill="none" stroke="#444" stroke-width="1.3"><path d="M29.5 1166 H41.5 Q46.5 1169 47.5 1177 Q47.5 1184 45 1189 H24.5 Q23 1187 24.8 1182 Q29 1175 29.5 1170 Z"/><path d="M34.5 1166 Q35 1176 32 1189 M39.5 1166 Q42 1177 39.5 1189 M26.5 1178.5 Q37 1177 47 1175 M24.2 1184 Q36 1183 47 1182"/></g></svg>
<svg style="left:47px;top:1188.5px;" width="7" height="7" viewBox="0 0 7 7"><path d="M0 7 L7 0 L7 7 Z" fill="#a8a8a8"/></svg>
<div style="left:12px;top:1212px;width:48px;height:2px;background:#6f6f6f;"></div>
<svg style="left:20px;top:1228px;" width="34" height="32" viewBox="0 0 34 32"><g transform="translate(-20,-1228)"><circle cx="38.3" cy="1242" r="8.8" fill="none" stroke="#4a4a4a" stroke-width="2.6"/><circle cx="38.3" cy="1242" r="6" fill="#4c4c4c"/><path d="M32 1248.3 L25.8 1254.5" stroke="#474747" stroke-width="4.6" stroke-linecap="butt"/></g></svg>
<svg style="left:14px;top:1305px;" width="44" height="80" viewBox="0 0 44 80"><circle cx="22.3" cy="22.2" r="18" fill="none" stroke="#5c5c5c" stroke-width="1.3"/><circle cx="22.3" cy="40.2" r="18" fill="none" stroke="#5c5c5c" stroke-width="1.3"/><path d="M14 67 Q22.3 74 30.6 67" fill="none" stroke="#5c5c5c" stroke-width="1.3"/><path d="M13 65 L14 68 L17 67 M28 67 L30.6 67 L31.5 65" fill="none" stroke="#5c5c5c" stroke-width="1.3"/></svg>
<svg style="left:2509px;top:1508px;" width="14" height="14" viewBox="0 0 14 14"><g fill="#9a9a9a"><rect x="9" y="1" width="2" height="2"/><rect x="6" y="4" width="2" height="2"/><rect x="9" y="4" width="2" height="2"/><rect x="3" y="7" width="2" height="2"/><rect x="6" y="7" width="2" height="2"/><rect x="9" y="7" width="2" height="2"/><rect x="0" y="10" width="2" height="2"/><rect x="3" y="10" width="2" height="2"/><rect x="6" y="10" width="2" height="2"/><rect x="9" y="10" width="2" height="2"/></g></svg>
<div style="left:666px;top:279px;width:1196px;height:33px;background:#3b3b3b;"></div>
<div style="left:666px;top:312px;width:1196px;height:938px;background:#363636;"></div>
<div style="left:936px;top:370px;width:926px;height:815px;background:#272727;"></div>
<div style="left:944px;top:378px;width:911px;height:581px;background:#3a3a3a;border-radius:4px;"></div>
<div style="left:666px;top:1185px;width:1196px;height:65px;background:#383838;"></div>
<div class="t" style="left:1228.50px;top:286.76px;font-size:18px;color:#e8e8e8;letter-spacing:-0.256px;">Settings</div>
<svg style="left:1838px;top:288px;" width="19" height="16" viewBox="0 0 19 16"><path d="M2.5 1.8 L16.5 14.2 M16.5 1.8 L2.5 14.2" stroke="#e8e8e8" stroke-width="1.6"/></svg>
<div class="t" style="left:951.40px;top:332.22px;font-size:21px;color:#f0f0f0;letter-spacing:-0.466px;">Tools</div>
<div style="left:672px;top:318px;width:258px;height:30px;background:#1e1e1e;border-radius:4px;"></div>
<svg style="left:678px;top:322px;" width="22" height="22" viewBox="0 0 22 22"><circle cx="9" cy="9" r="6.2" fill="none" stroke="#e0e0e0" stroke-width="1.6"/><path d="M13.5 13.5 L19.5 19.5" stroke="#e0e0e0" stroke-width="1.8"/></svg>
<div class="t" style="left:704.40px;top:326.91px;font-size:17px;color:#9a9a9a;letter-spacing:-1.062px;">Search</div>
<div style="left:671px;top:584px;width:260px;height:39px;background:#4d6a8e;border-radius:3px;"></div>
<div class="t" style="left:685.30px;top:370.76px;font-size:18px;color:#e6e6e6;letter-spacing:-0.535px;">General</div>
<div class="t" style="left:685.30px;top:415.76px;font-size:18px;color:#e6e6e6;letter-spacing:-0.157px;">Machine Learning</div>
<div class="t" style="left:685.30px;top:460.76px;font-size:18px;color:#e6e6e6;">Colour</div>
<div class="t" style="left:685.30px;top:505.76px;font-size:18px;color:#e6e6e6;letter-spacing:-0.332px;">Performance</div>
<div class="t" style="left:685.30px;top:550.76px;font-size:18px;color:#e6e6e6;letter-spacing:-0.260px;">User Interface</div>
<div class="t" style="left:685.30px;top:595.76px;font-size:18px;color:#e6e6e6;letter-spacing:-0.406px;">Tools</div>
<div class="t" style="left:685.30px;top:640.76px;font-size:18px;color:#e6e6e6;letter-spacing:-0.205px;">Shortcuts</div>
<div class="t" style="left:685.30px;top:685.76px;font-size:18px;color:#e6e6e6;letter-spacing:-0.381px;">Assistant</div>
<div class="t" style="left:685.30px;top:730.76px;font-size:18px;color:#e6e6e6;letter-spacing:-0.130px;">Photoshop Plugins</div>
<div class="t" style="left:685.30px;top:775.76px;font-size:18px;color:#e6e6e6;letter-spacing:-0.479px;">Linked Services</div>
<div class="t" style="left:685.30px;top:820.76px;font-size:18px;color:#e6e6e6;letter-spacing:-0.259px;">Miscellaneous</div>
<div class="t" style="left:1087.50px;top:397.61px;font-size:17px;color:#b6b6b6;letter-spacing:-0.548px;">Tool Handle Size:</div>
<div style="left:1222px;top:394px;width:61px;height:30px;background:#454545;border-radius:3px;"></div>
<div class="t" style="left:1231.40px;top:401.61px;font-size:17px;color:#dedede;letter-spacing:-0.083px;">Small</div>
<div style="left:1285px;top:394px;width:75px;height:30px;background:#454545;border-radius:3px;"></div>
<div class="t" style="left:1294.20px;top:401.61px;font-size:17px;color:#dedede;letter-spacing:0.446px;">Default</div>
<div style="left:1362px;top:394px;width:84px;height:30px;background:#262626;border-radius:3px;"></div>
<div class="t" style="left:1371.40px;top:401.61px;font-size:17px;color:#f4f4f4;letter-spacing:0.805px;">Medium</div>
<div style="left:1448px;top:394px;width:62px;height:30px;background:#454545;border-radius:3px;"></div>
<div class="t" style="left:1457.10px;top:401.61px;font-size:17px;color:#dedede;letter-spacing:-0.037px;">Large</div>
<div style="left:1196px;top:434px;width:18px;height:18px;background:#212121;border-radius:3px;"></div>
<div class="t" style="left:1222.40px;top:435.91px;font-size:17px;color:#c6c6c6;letter-spacing:-0.284px;">Select object when intersects with selection marquee</div>
<div style="left:1196px;top:462px;width:18px;height:18px;background:#212121;border-radius:3px;"></div>
<div class="t" style="left:1222.40px;top:463.97px;font-size:17px;color:#c6c6c6;letter-spacing:-0.266px;">Use Shift key to cycle tool groups</div>
<div style="left:1196px;top:490px;width:18px;height:18px;background:#212121;border-radius:3px;"></div>
<div class="t" style="left:1222.40px;top:492.03px;font-size:17px;color:#c6c6c6;letter-spacing:-0.358px;">Use mouse wheel to zoom</div>
<div style="left:1196px;top:518px;width:18px;height:18px;background:#212121;border-radius:3px;"></div>
<svg style="left:1196px;top:518px;" width="18" height="18" viewBox="0 0 18 18"><path d="M4 9.5 L7.3 12.6 L14 5.5" fill="none" stroke="#e8e8e8" stroke-width="1.7"/></svg>
<div class="t" style="left:1222.40px;top:520.09px;font-size:17px;color:#c6c6c6;letter-spacing:-0.348px;">Use &#x27;scrubby&#x27; zoom</div>
<div style="left:1196px;top:546px;width:18px;height:18px;background:#212121;border-radius:3px;"></div>
<div class="t" style="left:1222.40px;top:548.15px;font-size:17px;color:#c6c6c6;letter-spacing:-0.338px;">Enable Dial support (requires restart)</div>
<div style="left:1196px;top:574px;width:18px;height:18px;background:#212121;border-radius:3px;"></div>
<svg style="left:1196px;top:574px;" width="18" height="18" viewBox="0 0 18 18"><path d="M4 9.5 L7.3 12.6 L14 5.5" fill="none" stroke="#e8e8e8" stroke-width="1.7"/></svg>
<div class="t" style="left:1222.40px;top:576.21px;font-size:17px;color:#c6c6c6;letter-spacing:-0.336px;">Synchronise tools between documents</div>
<div style="left:1196px;top:602px;width:18px;height:18px;background:#212121;border-radius:3px;"></div>
<div class="t" style="left:1222.40px;top:604.27px;font-size:17px;color:#c6c6c6;letter-spacing:-0.285px;">Touch for gestures only</div>
<div style="left:1196px;top:630px;width:18px;height:18px;background:#212121;border-radius:3px;"></div>
<div class="t" style="left:1222.40px;top:632.33px;font-size:17px;color:#c6c6c6;letter-spacing:-0.247px;">Enable canvas rotation with Alt+scroll wheel</div>
<div class="t" style="left:1004.40px;top:665.61px;font-size:17px;color:#b6b6b6;letter-spacing:-0.327px;">Move Tool Aspect Constrain:</div>
<div style="left:1218px;top:660px;width:469px;height:25px;background:#444444;border-radius:3px;"></div>
<div class="t" style="left:1224.30px;top:665.61px;font-size:17px;color:#f2f2f2;letter-spacing:-0.280px;">Automatic (based on selection)</div>
<svg style="left:1671px;top:669px;" width="12" height="8" viewBox="0 0 12 8"><path d="M1 1.2 L6 6.2 L11 1.2" fill="none" stroke="#e0e0e0" stroke-width="1.5"/></svg>
<div class="t" style="left:1056.00px;top:699.31px;font-size:17px;color:#b6b6b6;letter-spacing:-0.063px;">*Tablet Input Method</div>
<div style="left:1218px;top:694px;width:469px;height:26px;background:#444444;border-radius:3px;"></div>
<div class="t" style="left:1224.30px;top:699.31px;font-size:17px;color:#f2f2f2;letter-spacing:-0.518px;">Low Precision</div>
<svg style="left:1671px;top:703px;" width="12" height="8" viewBox="0 0 12 8"><path d="M1 1.2 L6 6.2 L11 1.2" fill="none" stroke="#e0e0e0" stroke-width="1.5"/></svg>
<div class="t" style="left:985.50px;top:734.11px;font-size:17px;color:#b6b6b6;letter-spacing:-0.500px;">Create Text with Blend Gamma:</div>
<div style="left:1217px;top:727px;width:105px;height:30px;background:#1e1e1e;border-radius:4px;"></div>
<div class="t" style="left:1226.70px;top:734.11px;font-size:17px;color:#f2f2f2;letter-spacing:-0.998px;">1,45</div>
<svg style="left:1304.5px;top:738px;" width="12" height="8" viewBox="0 0 12 8"><path d="M1 1.2 L6 6.2 L11 1.2" fill="none" stroke="#e0e0e0" stroke-width="1.5"/></svg>
<div class="t" style="left:1092.20px;top:785.81px;font-size:17px;color:#b6b6b6;letter-spacing:-0.412px;">Nudge Distance:</div>
<div style="left:1218px;top:778px;width:112px;height:30px;background:#1e1e1e;border-radius:4px;"></div>
<div class="t" style="left:1227.30px;top:785.81px;font-size:17px;color:#f2f2f2;letter-spacing:-0.385px;">1 px</div>
<div class="t" style="left:1026.00px;top:821.81px;font-size:17px;color:#b6b6b6;letter-spacing:-0.216px;">Modifier Nudge Distance:</div>
<div style="left:1218px;top:814px;width:112px;height:30px;background:#1e1e1e;border-radius:4px;"></div>
<div class="t" style="left:1227.30px;top:821.81px;font-size:17px;color:#f2f2f2;letter-spacing:-0.399px;">10 px</div>
<div style="left:1338px;top:798px;width:222px;height:26px;background:#444444;border-radius:3px;"></div>
<div class="t" style="left:1345.00px;top:804.11px;font-size:17px;color:#f2f2f2;letter-spacing:-0.910px;">Pixels</div>
<svg style="left:1544px;top:807px;" width="12" height="8" viewBox="0 0 12 8"><path d="M1 1.2 L6 6.2 L11 1.2" fill="none" stroke="#e0e0e0" stroke-width="1.5"/></svg>
<div class="t" style="left:1008.00px;top:859.31px;font-size:17px;color:#b6b6b6;letter-spacing:-0.049px;">Additional dictionary folder:</div>
<div class="t" style="left:1221.90px;top:859.31px;font-size:17px;color:#dcdcdc;letter-spacing:-0.128px;">C:\ProgramData\Affinity\Common\2.0\Dictionaries</div>
<div style="left:1217px;top:884px;width:111px;height:31px;background:#444444;border-radius:4px;"></div>
<div class="t" style="left:1238.40px;top:891.51px;font-size:17px;color:#e6e6e6;letter-spacing:-0.107px;">Browse...</div>
<div style="left:1335px;top:884px;width:111px;height:31px;background:#444444;border-radius:4px;"></div>
<div class="t" style="left:1369.00px;top:891.51px;font-size:17px;color:#e6e6e6;letter-spacing:0.477px;">Open</div>
<div class="t" style="left:1728.60px;top:933.91px;font-size:17px;color:#a8a8a8;letter-spacing:-0.451px;">*Requires restart</div>
<div style="left:1732px;top:1203px;width:112px;height:29px;background:#474747;border-radius:4px;"></div>
<div class="t" style="left:1768.50px;top:1209.61px;font-size:17px;color:#e6e6e6;letter-spacing:-0.914px;">Close</div>
<div style="left:2129px;top:165px;width:399px;height:45px;background:#282828;"></div>
<div style="left:2156px;top:168px;width:91px;height:42px;background:#363636;"></div>
<svg style="left:2137px;top:180px;" width="10" height="14" viewBox="0 0 10 14"><rect x="1.5" y="1" width="2" height="12" fill="#8a8a8a"/><rect x="6.5" y="1" width="2" height="12" fill="#8a8a8a"/></svg>
<svg style="left:2499px;top:179px;" width="18" height="16" viewBox="0 0 18 16"><g fill="#c8c8c8"><rect x="1" y="1" width="16" height="3"/><rect x="1" y="6.5" width="16" height="3"/><rect x="1" y="12" width="16" height="3"/></g></svg>
<div class="t" style="left:2164.40px;top:178.61px;font-size:17px;color:#f0f0f0;letter-spacing:-0.274px;">Histogram</div>
<div class="t" style="left:2255.20px;top:178.61px;font-size:17px;color:#cdcdcd;letter-spacing:-0.316px;">Colour</div>
<div style="left:2144px;top:224px;width:149px;height:28px;background:#2f2f2f;border-radius:4px;"></div>
<div class="t" style="left:2150.80px;top:230.71px;font-size:17px;color:#9a9a9a;letter-spacing:-0.563px;">All Channels</div>
<svg style="left:2275px;top:232px;" width="12" height="8" viewBox="0 0 12 8"><path d="M1 1.2 L6 6.2 L11 1.2" fill="none" stroke="#9a9a9a" stroke-width="1.4"/></svg>
<div style="left:2349px;top:230px;width:18px;height:18px;background:#2b2b2b;border-radius:3px;"></div>
<div class="t" style="left:2375.50px;top:230.71px;font-size:17px;color:#8a8a8a;letter-spacing:-0.946px;">Layer</div>
<div style="left:2423px;top:230px;width:18px;height:18px;background:#2b2b2b;border-radius:3px;"></div>
<div class="t" style="left:2449.70px;top:230.71px;font-size:17px;color:#8a8a8a;letter-spacing:-0.430px;">Marquee</div>
<div style="left:2143px;top:260px;width:371px;height:177px;background:#000000;box-shadow:inset 0 0 0 2px #262626;"></div>
<div class="t" style="left:2143.50px;top:450.36px;font-size:16px;color:#8a8a8a;letter-spacing:0.093px;">Mean: -</div>
<div class="t" style="left:2143.50px;top:472.36px;font-size:16px;color:#8a8a8a;letter-spacing:-0.145px;">Std. Dev.: -</div>
<div class="t" style="left:2143.50px;top:494.36px;font-size:16px;color:#8a8a8a;letter-spacing:0.166px;">Median: -</div>
<div class="t" style="left:2143.50px;top:516.36px;font-size:16px;color:#8a8a8a;letter-spacing:-0.323px;">Pixels: -</div>
<div class="t" style="left:2329.70px;top:450.36px;font-size:16px;color:#8a8a8a;letter-spacing:-0.284px;">Level: -</div>
<div class="t" style="left:2329.70px;top:472.36px;font-size:16px;color:#8a8a8a;letter-spacing:-0.323px;">Pixels: -</div>
<div class="t" style="left:2329.70px;top:494.36px;font-size:16px;color:#8a8a8a;letter-spacing:-0.090px;">Percentile: -</div>
<div class="t" style="left:2143.50px;top:551.46px;font-size:16px;color:#8a8a8a;letter-spacing:0.191px;">Min:</div>
<div style="left:2178px;top:544px;width:82px;height:28px;background:#2f2f2f;border-radius:4px;"></div>
<div class="t" style="left:2187.20px;top:551.46px;font-size:16px;color:#9a9a9a;">0</div>
<div class="t" style="left:2392.60px;top:551.46px;font-size:16px;color:#8a8a8a;letter-spacing:-0.318px;">Max:</div>
<div style="left:2430px;top:544px;width:81px;height:28px;background:#2f2f2f;border-radius:4px;"></div>
<div class="t" style="left:2439.30px;top:551.46px;font-size:16px;color:#9a9a9a;">1</div>
<div style="left:2129px;top:598px;width:399px;height:45px;background:#282828;"></div>
<div style="left:2156px;top:601px;width:61px;height:42px;background:#363636;"></div>
<svg style="left:2137px;top:613px;" width="10" height="14" viewBox="0 0 10 14"><rect x="1.5" y="1" width="2" height="12" fill="#8a8a8a"/><rect x="6.5" y="1" width="2" height="12" fill="#8a8a8a"/></svg>
<svg style="left:2499px;top:612px;" width="18" height="16" viewBox="0 0 18 16"><g fill="#c8c8c8"><rect x="1" y="1" width="16" height="3"/><rect x="1" y="6.5" width="16" height="3"/><rect x="1" y="12" width="16" height="3"/></g></svg>
<div class="t" style="left:2164.60px;top:610.41px;font-size:17px;color:#f0f0f0;letter-spacing:-1.039px;">Layers</div>
<div class="t" style="left:2225.40px;top:610.41px;font-size:17px;color:#cdcdcd;letter-spacing:-0.766px;">Channels</div>
<div class="t" style="left:2306.40px;top:610.41px;font-size:17px;color:#cdcdcd;letter-spacing:-0.925px;">Brushes</div>
<div class="t" style="left:2378.30px;top:610.41px;font-size:17px;color:#cdcdcd;letter-spacing:-0.586px;">Stock</div>
<div class="t" style="left:2141.00px;top:657.26px;font-size:16px;color:#8a8a8a;letter-spacing:-0.648px;">Opacity:</div>
<div style="left:2201px;top:649px;width:81px;height:29px;background:#2f2f2f;border-radius:4px;"></div>
<div class="t" style="left:2211.20px;top:657.26px;font-size:16px;color:#9a9a9a;letter-spacing:-0.395px;">100 %</div>
<svg style="left:2265px;top:660px;" width="12" height="8" viewBox="0 0 12 8"><path d="M1 1.2 L6 6.2 L11 1.2" fill="none" stroke="#9a9a9a" stroke-width="1.4"/></svg>
<div style="left:2289px;top:649px;width:165px;height:29px;background:#2f2f2f;border-radius:4px;"></div>
<div class="t" style="left:2297.20px;top:657.26px;font-size:16px;color:#9a9a9a;letter-spacing:0.240px;">Normal</div>
<svg style="left:2436px;top:660px;" width="12" height="8" viewBox="0 0 12 8"><path d="M1 1.2 L6 6.2 L11 1.2" fill="none" stroke="#9a9a9a" stroke-width="1.4"/></svg>
<svg style="left:2462px;top:655px;" width="20" height="20" viewBox="0 0 20 20"><g transform="translate(9.5 9.4)" fill="#9c9c9c"><circle r="5.6"/><rect x="-1.5" y="-7.8" width="3" height="3.5" transform="rotate(0.0)"/><rect x="-1.5" y="-7.8" width="3" height="3.5" transform="rotate(51.4)"/><rect x="-1.5" y="-7.8" width="3" height="3.5" transform="rotate(102.9)"/><rect x="-1.5" y="-7.8" width="3" height="3.5" transform="rotate(154.3)"/><rect x="-1.5" y="-7.8" width="3" height="3.5" transform="rotate(205.7)"/><rect x="-1.5" y="-7.8" width="3" height="3.5" transform="rotate(257.1)"/><rect x="-1.5" y="-7.8" width="3" height="3.5" transform="rotate(308.6)"/><circle r="2.4" fill="#363636"/></g></svg>
<svg style="left:2497px;top:653px;" width="16" height="22" viewBox="0 0 16 22"><path d="M4.4 9.5 V5.8 A3.6 3.6 0 0 1 11.6 5.8 V9.5" fill="none" stroke="#9c9c9c" stroke-width="1.7"/><rect x="3" y="10.1" width="10.9" height="9.1" rx="1" fill="#9c9c9c"/></svg>
<div style="left:2129px;top:685px;width:399px;height:319px;background:#282828;"></div>
<div style="left:2129px;top:1004px;width:399px;height:39px;background:#363636;"></div>
<svg style="left:2140px;top:1008px;" width="28" height="28" viewBox="0 0 28 28"><rect x="2.6" y="2.7" width="13.6" height="13.9" rx="1.8" fill="none" stroke="#7e7e7e" stroke-width="1.5"/><path d="M19.2 7.5 V19.5 H7.8" fill="none" stroke="#7e7e7e" stroke-width="1.4"/><path d="M23 11 V23.2 H11.5" fill="none" stroke="#7e7e7e" stroke-width="1.4"/></svg>
<svg style="left:2279px;top:1012px;" width="24" height="22" viewBox="0 0 24 22"><rect x="0.5" y="1" width="21" height="19" rx="2" fill="#7e7e7e"/><circle cx="11" cy="10.5" r="4.5" fill="#363636"/></svg>
<svg style="left:2307px;top:1008px;" width="28" height="28" viewBox="0 0 28 28"><circle cx="13" cy="13.5" r="11" fill="none" stroke="#7e7e7e" stroke-width="1.4"/><path d="M19.5 7.5 A8 8 0 0 1 7.5 19.5 Z" fill="#7e7e7e"/></svg>
<svg style="left:2339px;top:1008px;" width="24" height="28" viewBox="0 0 24 28"><path d="M2 2 H20 M2 25.5 H20" stroke="#7e7e7e" stroke-width="1.3"/><path d="M3 21.5 V7 H10 M3 13.5 H8.5 M10 7 L19 21.5 M19 7 L10 21.5" fill="none" stroke="#7e7e7e" stroke-width="2.4"/></svg>
<svg style="left:2372px;top:1012px;" width="18" height="22" viewBox="0 0 18 22"><path d="M2.5 2 H15.5 L11 10.5 L15.5 19.5 H2.5 L7 10.5 Z" fill="#7e7e7e"/></svg>
<svg style="left:2432px;top:1009px;" width="30" height="26" viewBox="0 0 30 26"><path d="M2 5 Q2 3 4 3 H11 L13 5 H25 Q27 5 27 7 V22 Q27 24 25 24 H4 Q2 24 2 22 Z" fill="#7e7e7e"/><path d="M2 3.5 H11" stroke="#7e7e7e" stroke-width="1"/></svg>
<svg style="left:2465px;top:1008px;" width="24" height="28" viewBox="0 0 24 28"><rect x="2.5" y="2.5" width="17" height="23" rx="2" fill="none" stroke="#7e7e7e" stroke-width="1.4"/><g fill="#7e7e7e"><rect x="6" y="6" width="3" height="3"/><rect x="12" y="6" width="3" height="3"/><rect x="9" y="9" width="3" height="3"/><rect x="6" y="12" width="3" height="3"/><rect x="12" y="12" width="3" height="3"/><rect x="9" y="15" width="3" height="3"/><rect x="6" y="18" width="3" height="3"/><rect x="12" y="18" width="3" height="3"/></g></svg>
<svg style="left:2495px;top:1008px;" width="24" height="28" viewBox="0 0 24 28"><path d="M9 3 H15 M2 5.5 H22" stroke="#7e7e7e" stroke-width="1.4"/><path d="M4.5 6 V24.5 Q4.5 26 6 26 H18 Q19.5 26 19.5 24.5 V6" fill="none" stroke="#7e7e7e" stroke-width="1.4"/><path d="M9.5 9 V22.5 M14.5 9 V22.5" stroke="#7e7e7e" stroke-width="1.3"/></svg>
<div style="left:2129px;top:1043px;width:399px;height:45px;background:#282828;"></div>
<div style="left:2156px;top:1046px;width:87px;height:42px;background:#363636;"></div>
<svg style="left:2137px;top:1058px;" width="10" height="14" viewBox="0 0 10 14"><rect x="1.5" y="1" width="2" height="12" fill="#8a8a8a"/><rect x="6.5" y="1" width="2" height="12" fill="#8a8a8a"/></svg>
<svg style="left:2499px;top:1057px;" width="18" height="16" viewBox="0 0 18 16"><g fill="#c8c8c8"><rect x="1" y="1" width="16" height="3"/><rect x="1" y="6.5" width="16" height="3"/><rect x="1" y="12" width="16" height="3"/></g></svg>
<div class="t" style="left:2164.60px;top:1055.61px;font-size:17px;color:#f0f0f0;letter-spacing:-0.207px;">Navigator</div>
<div class="t" style="left:2251.50px;top:1055.61px;font-size:17px;color:#cdcdcd;letter-spacing:-0.570px;">Transform</div>
<div class="t" style="left:2338.30px;top:1055.61px;font-size:17px;color:#cdcdcd;letter-spacing:-0.215px;">History</div>
<div style="left:2150px;top:1102px;width:26px;height:26px;background:#2a2a2a;border-radius:3px;"></div>
<div style="left:2154.5px;top:1114px;width:16px;height:1.8px;background:#a0a0a0;"></div>
<div style="left:2185px;top:1106px;width:213px;height:8px;background:#2a2a2a;border-radius:4px;"></div>
<svg style="left:2184px;top:1103px;" width="12" height="15" viewBox="0 0 12 15"><path d="M1.5 1 H10.5 V9.5 L6 13.5 L1.5 9.5 Z" fill="#6a6a6a"/></svg>
<div style="left:2189.4px;top:1124px;width:1.4px;height:5px;background:#6a6a6a;"></div>
<div style="left:2200.4px;top:1124px;width:1.4px;height:5px;background:#6a6a6a;"></div>
<div style="left:2224.4px;top:1124px;width:1.4px;height:5px;background:#6a6a6a;"></div>
<div style="left:2258.4px;top:1124px;width:1.4px;height:5px;background:#6a6a6a;"></div>
<div style="left:2269.4px;top:1124px;width:1.4px;height:5px;background:#6a6a6a;"></div>
<div style="left:2291.4px;top:1124px;width:1.4px;height:5px;background:#6a6a6a;"></div>
<div style="left:2313.9px;top:1124px;width:1.4px;height:5px;background:#6a6a6a;"></div>
<div style="left:2344.4px;top:1124px;width:1.4px;height:5px;background:#6a6a6a;"></div>
<div style="left:2355.4px;top:1124px;width:1.4px;height:5px;background:#6a6a6a;"></div>
<div style="left:2369.4px;top:1124px;width:1.4px;height:5px;background:#6a6a6a;"></div>
<div style="left:2391.4px;top:1124px;width:1.4px;height:5px;background:#6a6a6a;"></div>
<div style="left:2405px;top:1102px;width:26px;height:26px;background:#2a2a2a;border-radius:3px;"></div>
<svg style="left:2409px;top:1106px;" width="18" height="18" viewBox="0 0 18 18"><path d="M9 1.5 V16.5 M1.5 9 H16.5" stroke="#b8b8b8" stroke-width="1.6"/></svg>
<div style="left:2437px;top:1100px;width:75px;height:30px;background:#2f2f2f;border-radius:4px;"></div>
<div class="t" style="left:2446.50px;top:1108.16px;font-size:16px;color:#9a9a9a;letter-spacing:-0.493px;">0 %</div>
<div style="left:2129px;top:1136px;width:399px;height:1.5px;background:#252525;"></div>
</body></html>
